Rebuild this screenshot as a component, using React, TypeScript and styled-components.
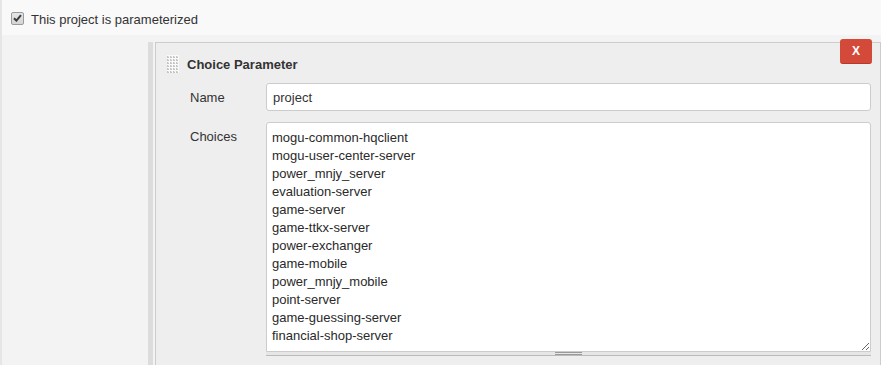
import React from "react";
import styled, { createGlobalStyle } from "styled-components";

const GlobalStyle = createGlobalStyle`
  html, body {
    margin: 0;
    padding: 0;
    height: 365px;
    overflow: hidden;
    background: #f3f3f3;
    font-family: "Liberation Sans", Arial, sans-serif;
    font-size: 13px;
    color: #333;
  }
`;

const Page = styled.div`
  display: flex;
  flex-direction: column;
  height: 365px;
  border-left: 2px solid #e6e6e6;
  box-sizing: border-box;
`;

const TopRow = styled.div`
  height: 35px;
  box-sizing: border-box;
  display: flex;
  align-items: center;
  padding: 3px 0 0 9px;
  background: #f9f9f9;
  gap: 7px;
`;

const CheckBox = styled.span`
  width: 11px;
  height: 11px;
  border: 1px solid #9a9a9a;
  border-radius: 2px;
  background: linear-gradient(#e6e6e6, #d4d4d4);
  display: flex;
  align-items: center;
  justify-content: center;
  margin-top: -2px;
`;

const Section = styled.div`
  flex: 1;
  display: flex;
  padding-top: 7px;
  padding-left: 146px;
  background: #f3f3f3;
  min-height: 0;
`;

const Band = styled.div`
  width: 5px;
  margin-right: 2px;
  background: #dcdcdc;
`;

const Panel = styled.div`
  position: relative;
  flex: 1;
  border: 1px solid #cccccc;
  border-bottom: none;
  background: #eeeeee;
  padding: 12px 9px 0 11px;
  display: flex;
  flex-direction: column;
`;

const DeleteButton = styled.button`
  position: absolute;
  top: -4px;
  right: 8px;
  width: 32px;
  height: 25px;
  border: none;
  border-radius: 3px;
  background: #d44a3a;
  border-bottom: 1px solid #b8382a;
  color: #fff;
  font-family: "Liberation Sans", Arial, sans-serif;
  font-weight: bold;
  font-size: 12px;
  padding: 0;
  display: flex;
  align-items: center;
  justify-content: center;
`;

const Header = styled.div`
  display: flex;
  align-items: center;
  height: 18px;
  gap: 8px;
`;

const Grip = styled.span`
  width: 12px;
  height: 18px;
  display: block;
  background: #fafafa;
`;

const Title = styled.span`
  font-weight: bold;
  color: #333;
`;

const FormRow = styled.div<{ $top: number }>`
  display: grid;
  grid-template-columns: 76px 1fr;
  margin-top: ${(p) => p.$top}px;
  padding-left: 23px;
`;

const Label = styled.label<{ $center?: boolean }>`
  color: #333;
  display: flex;
  align-items: ${(p) => (p.$center ? "center" : "flex-start")};
  padding-top: ${(p) => (p.$center ? "0" : "7px")};
`;

const TextInput = styled.input`
  height: 28px;
  box-sizing: border-box;
  border: 1px solid #cccccc;
  border-radius: 3px;
  background: #fff;
  padding: 0 6px;
  font-family: "Liberation Sans", Arial, sans-serif;
  font-size: 13px;
  color: #333;
  outline: none;
`;

const AreaWrap = styled.div`
  display: flex;
  flex-direction: column;
`;

const TextArea = styled.textarea`
  height: 230px;
  box-sizing: border-box;
  border: 1px solid #cccccc;
  border-radius: 3px 3px 0 0;
  background: #fff;
  padding: 6px 5px 2px;
  font-family: "Liberation Sans", Arial, sans-serif;
  font-size: 13px;
  line-height: 18px;
  color: #2a2a2a;
  resize: vertical;
  outline: none;
  overflow: hidden;
  display: block;
`;

const ResizeBar = styled.div`
  height: 3px;
  background: #e6e6e6;
  border-bottom: 1px solid #bbbbbb;
  display: flex;
  justify-content: center;
  align-items: center;
`;

const ResizeHandle = styled.span`
  width: 27px;
  height: 3px;
  border-top: 1px solid #9a9a9a;
  border-bottom: 1px solid #9a9a9a;
  box-sizing: border-box;
`;

const choices = [
  "mogu-common-hqclient",
  "mogu-user-center-server",
  "power_mnjy_server",
  "evaluation-server",
  "game-server",
  "game-ttkx-server",
  "power-exchanger",
  "game-mobile",
  "power_mnjy_mobile",
  "point-server",
  "game-guessing-server",
  "financial-shop-server",
];

function GripDots() {
  const dots: React.ReactNode[] = [];
  for (let c = 0; c < 4; c++) {
    for (let r = 0; r < 6; r++) {
      dots.push(
        <rect key={`${c}-${r}`} x={c * 3} y={r * 3 + 1} width={2} height={2} fill="#c4c4c4" />
      );
      dots.push(
        <rect key={`d${c}-${r}`} x={c * 3 + 1} y={r * 3 + 1} width={1} height={1} fill="#e2e2e2" />
      );
    }
  }
  return (
    <svg width="12" height="18" viewBox="0 0 12 18" style={{ display: "block" }}>
      {dots}
    </svg>
  );
}

export default function App() {
  return (
    <>
      <GlobalStyle />
      <Page>
        <TopRow>
          <CheckBox>
            <svg width="9" height="8" viewBox="0 0 9 8">
              <path d="M1 4.2 L3.4 6.6 L8 1.2" stroke="#3a3a3a" strokeWidth="2" fill="none" />
            </svg>
          </CheckBox>
          <span>This project is parameterized</span>
        </TopRow>
        <Section>
          <Band />
          <Panel>
            <DeleteButton type="button">X</DeleteButton>
            <Header>
              <Grip>
                <GripDots />
              </Grip>
              <Title>Choice Parameter</Title>
            </Header>
            <FormRow $top={10}>
              <Label $center>Name</Label>
              <TextInput defaultValue="project" />
            </FormRow>
            <FormRow $top={11}>
              <Label>Choices</Label>
              <AreaWrap>
                <TextArea defaultValue={choices.join("\n")} spellCheck={false} />
                <ResizeBar>
                  <ResizeHandle />
                </ResizeBar>
              </AreaWrap>
            </FormRow>
          </Panel>
        </Section>
      </Page>
    </>
  );
}
